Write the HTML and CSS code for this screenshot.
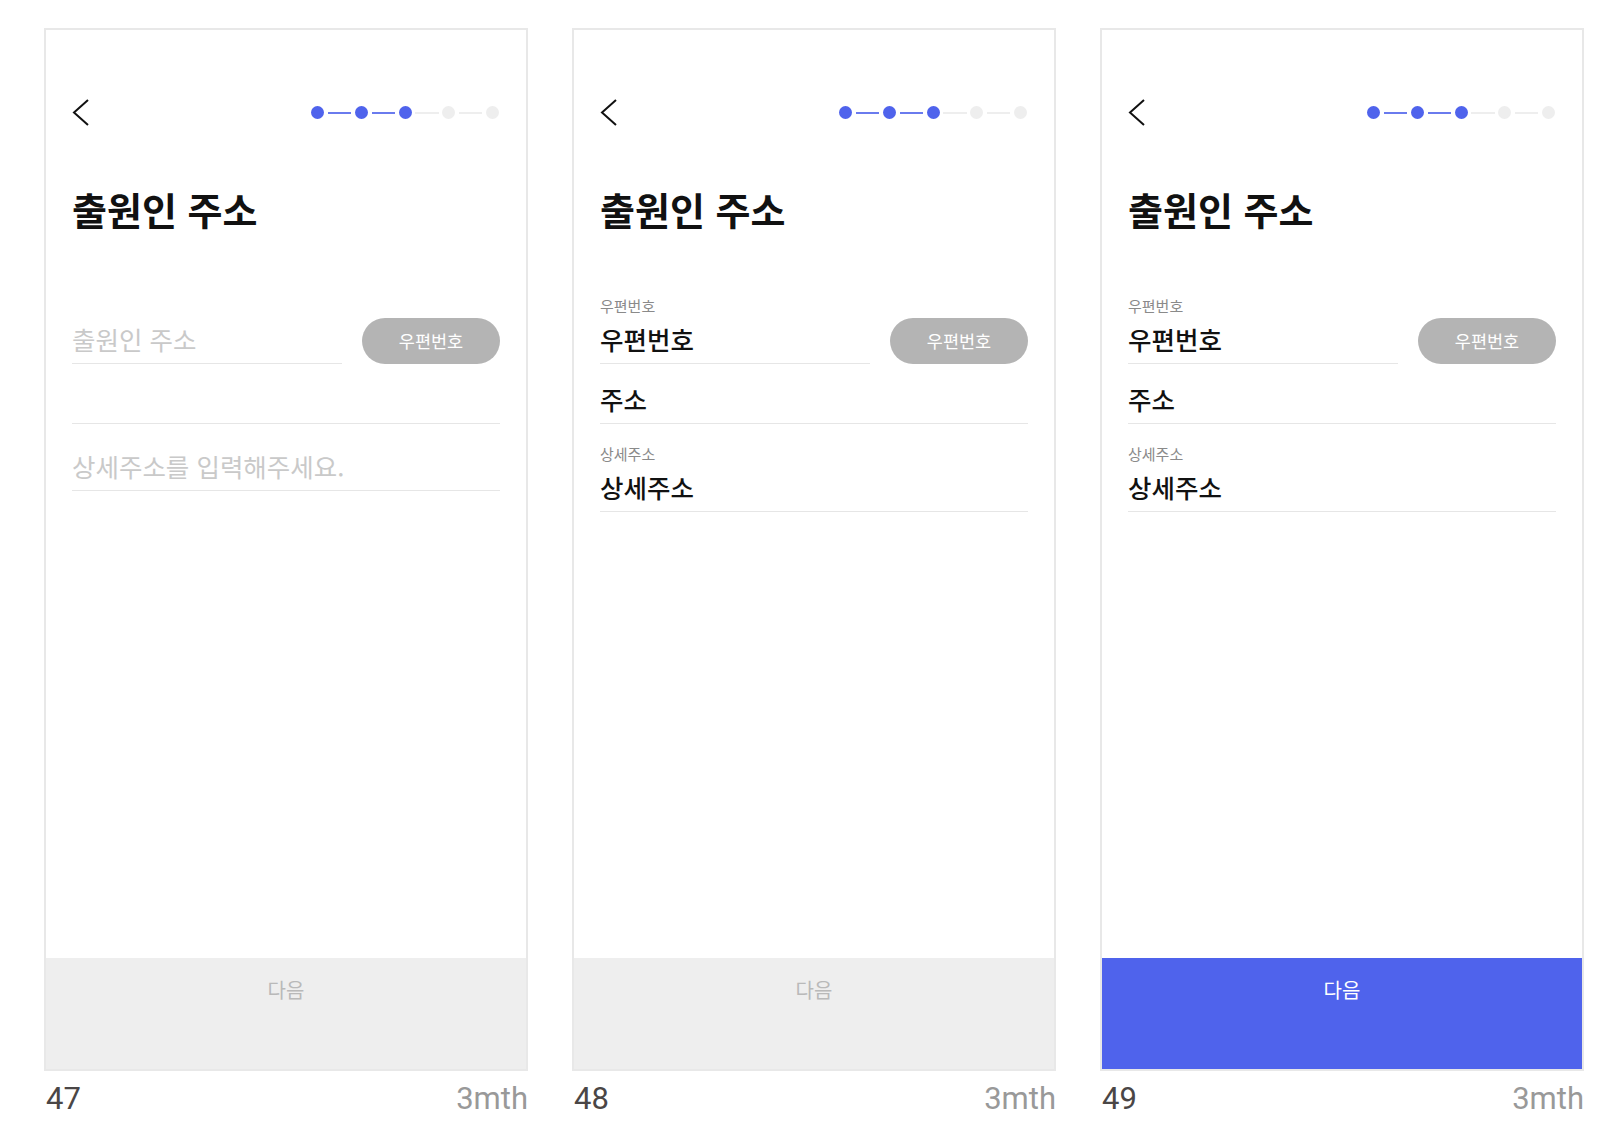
FILE: index.html
```html
<!DOCTYPE html>
<html lang="ko">
<head>
  <meta charset="UTF-8">
  <meta name="viewport" content="width=device-width, initial-scale=1.0">
  <link rel="stylesheet" href="styles.css">
  <title>출원인 주소</title>
</head>
<body>
  <div class="board">

    <div class="shot">
      <div class="phone">
        <div class="top-bar">
          <svg class="back" width="17" height="27" viewBox="0 0 17 27"><polyline points="16,1 2,13.5 16,26" fill="none" stroke="#111" stroke-width="2"/></svg>
          <div class="steps">
            <span class="dot on"></span><span class="line on"></span><span class="dot on"></span><span class="line on"></span><span class="dot on"></span><span class="line"></span><span class="dot"></span><span class="line"></span><span class="dot"></span>
          </div>
        </div>
        <h1 class="title">출원인 주소</h1>
        <div class="form">
          <div class="zip-row">
            <div class="field">
              <div class="field-value empty">출원인 주소</div>
            </div>
            <div class="zip-btn">우편번호</div>
          </div>
          <div class="field addr"><div class="field-value">&nbsp;</div></div>
          <div class="field detail bare"><div class="field-value empty">상세주소를 입력해주세요.</div></div>
        </div>
        <div class="next-btn">다음</div>
      </div>
      <div class="caption"><span class="num">47</span><span class="age">3mth</span></div>
    </div>

    <div class="shot">
      <div class="phone">
        <div class="top-bar">
          <svg class="back" width="17" height="27" viewBox="0 0 17 27"><polyline points="16,1 2,13.5 16,26" fill="none" stroke="#111" stroke-width="2"/></svg>
          <div class="steps">
            <span class="dot on"></span><span class="line on"></span><span class="dot on"></span><span class="line on"></span><span class="dot on"></span><span class="line"></span><span class="dot"></span><span class="line"></span><span class="dot"></span>
          </div>
        </div>
        <h1 class="title">출원인 주소</h1>
        <div class="form">
          <div class="zip-row">
            <div class="field">
              <div class="field-label">우편번호</div>
              <div class="field-value">우편번호</div>
            </div>
            <div class="zip-btn">우편번호</div>
          </div>
          <div class="field addr"><div class="field-value">주소</div></div>
          <div class="field detail">
            <div class="field-label">상세주소</div>
            <div class="field-value">상세주소</div>
          </div>
        </div>
        <div class="next-btn">다음</div>
      </div>
      <div class="caption"><span class="num">48</span><span class="age">3mth</span></div>
    </div>

    <div class="shot">
      <div class="phone">
        <div class="top-bar">
          <svg class="back" width="17" height="27" viewBox="0 0 17 27"><polyline points="16,1 2,13.5 16,26" fill="none" stroke="#111" stroke-width="2"/></svg>
          <div class="steps">
            <span class="dot on"></span><span class="line on"></span><span class="dot on"></span><span class="line on"></span><span class="dot on"></span><span class="line"></span><span class="dot"></span><span class="line"></span><span class="dot"></span>
          </div>
        </div>
        <h1 class="title">출원인 주소</h1>
        <div class="form">
          <div class="zip-row">
            <div class="field">
              <div class="field-label">우편번호</div>
              <div class="field-value">우편번호</div>
            </div>
            <div class="zip-btn">우편번호</div>
          </div>
          <div class="field addr"><div class="field-value">주소</div></div>
          <div class="field detail">
            <div class="field-label">상세주소</div>
            <div class="field-value">상세주소</div>
          </div>
        </div>
        <div class="next-btn active">다음</div>
      </div>
      <div class="caption"><span class="num">49</span><span class="age">3mth</span></div>
    </div>

  </div>
</body>
</html>
```

FILE: styles.css
```css
  body {
    margin: 0;
    background-color: #fff;
    font-family: "Noto Sans CJK KR", "Noto Sans", sans-serif;
    color: #111;
  }

  .board {
    display: flex;
    gap: 44px;
    padding: 28px 0 0 44px;
  }

  .shot {
    width: 484px;
  }

  .phone {
    box-sizing: border-box;
    display: flex;
    flex-direction: column;
    height: 1043px;
    border: 2px solid #e8e8e8;
    background-color: #fff;
  }

  .top-bar {
    display: flex;
    justify-content: space-between;
    align-items: center;
    margin-top: 69px;
    padding: 0 27px 0 26px;
    height: 27px;
  }

  .back {
    display: block;
  }

  .steps {
    display: flex;
    align-items: center;
  }

  .dot {
    width: 13px;
    height: 13px;
    border-radius: 100%;
    background-color: #eeeeee;
  }

  .dot.on {
    background-color: #4f63ec;
  }

  .line {
    width: 23.5px;
    height: 2px;
    margin: 0 3.6px;
    background-color: #eeeeee;
  }

  .line.on {
    background-color: #6a7bee;
  }

  .title {
    margin: 61px 26px 0;
    font-size: 38px;
    line-height: 43px;
    font-weight: 700;
  }

  .form {
    margin-top: 68px;
    padding: 0 26px;
    flex: 1;
  }

  .zip-row {
    display: flex;
    align-items: flex-end;
    gap: 20px;
    height: 66px;
  }

  .zip-row .field {
    flex: 1;
  }

  .field {
    border-bottom: 1px solid #e6e6e6;
  }

  .field-label {
    font-size: 15px;
    line-height: 15px;
    margin-bottom: 11px;
    color: #8a8a8a;
  }

  .field-value {
    font-size: 25.5px;
    line-height: 30px;
    padding-bottom: 9px;
    font-weight: 500;
  }

  .field-value.empty {
    color: #c9c9c9;
    font-weight: 400;
  }

  .addr {
    margin-top: 20px;
  }

  .detail {
    margin-top: 22px;
  }

  .detail.bare {
    margin-top: 27px;
  }

  .zip-btn {
    width: 138px;
    height: 46px;
    border-radius: 23px;
    background-color: #b4b4b4;
    color: #fff;
    font-size: 17.5px;
    line-height: 46px;
    text-align: center;
  }

  .next-btn {
    height: 111px;
    padding-top: 20px;
    box-sizing: border-box;
    background-color: #eeeeee;
    color: #b9b9b9;
    font-size: 20px;
    line-height: 24px;
    text-align: center;
  }

  .next-btn.active {
    background-color: #4f63ec;
    color: #fff;
  }

  .caption {
    display: flex;
    justify-content: space-between;
    margin-top: 11px;
    font-family: Roboto, "Liberation Sans", sans-serif;
    font-size: 31px;
    line-height: 34px;
  }

  .caption .num {
    color: #4a4646;
    padding-left: 2px;
  }

  .caption .age {
    color: #999;
  }
```
